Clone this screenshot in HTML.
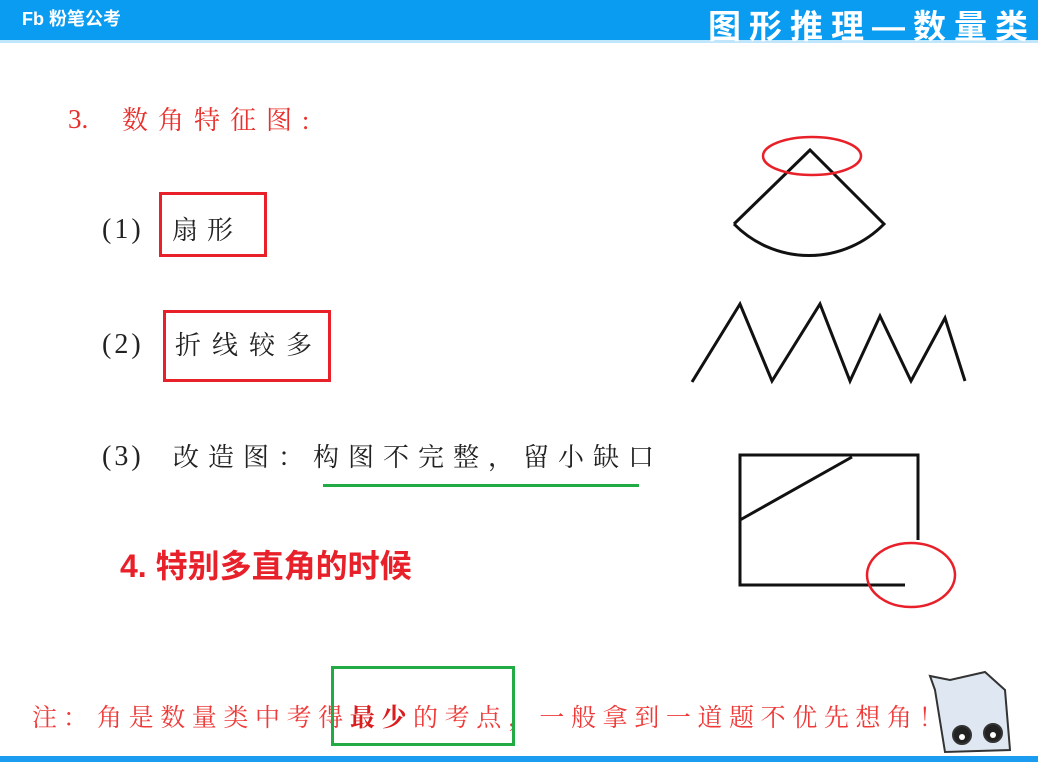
<!DOCTYPE html>
<html><head><meta charset="utf-8"><style>
body{margin:0;width:1038px;height:762px;overflow:hidden;background:#fff;position:relative;font-family:"Liberation Sans","Noto Sans CJK SC",sans-serif}
.a{position:absolute;white-space:nowrap}
.k{font-family:"Liberation Serif","Noto Serif CJK SC",serif}
</style></head><body>
<div class="a" style="left:0;top:0;width:1038px;height:40px;background:#0a9cf0;border-bottom:3px solid #bfe6fb"></div>
<div class="a" style="left:22px;top:5px;color:#fff;font-size:18px;font-weight:bold">Fb 粉笔公考</div>
<div class="a" style="left:708px;top:0px;color:#fff;font-size:33px;font-weight:bold;letter-spacing:8px">图形推理—数量类</div>

<div class="a k" style="left:68px;top:104px;color:#e8302c;font-size:27px">3.</div>
<div class="a k" style="left:122px;top:100px;color:#e8302c;font-size:26px;letter-spacing:10px">数角特征图:</div>
<div class="a k" style="left:102px;top:214px;color:#222;font-size:28px;letter-spacing:3px">(1)</div>
<div class="a k" style="left:172px;top:210px;color:#222;font-size:26px;letter-spacing:9px">扇形</div>
<div class="a" style="left:159px;top:192px;width:102px;height:59px;border:3px solid #e8202a"></div>
<div class="a k" style="left:102px;top:329px;color:#222;font-size:28px;letter-spacing:3px">(2)</div>
<div class="a k" style="left:175px;top:325px;color:#222;font-size:26px;letter-spacing:11px">折线较多</div>
<div class="a" style="left:163px;top:310px;width:162px;height:66px;border:3px solid #e8202a"></div>
<div class="a k" style="left:102px;top:441px;color:#222;font-size:28px;letter-spacing:3px">(3)</div>
<div class="a k" style="left:173px;top:437px;color:#222;font-size:26px;letter-spacing:9px">改造图：构图不完整，留小缺口</div>
<div class="a" style="left:323px;top:484px;width:316px;height:3px;background:#22aa44"></div>
<div class="a" style="left:120px;top:541px;color:#e8202a;font-size:32px;font-weight:bold">4. 特别多直角的时候</div>

<div class="a k" style="left:32px;top:698px;color:#ee3a38;font-size:25px;letter-spacing:6px">注：</div>
<div class="a k" style="left:97px;top:698px;color:#ee3a38;font-size:25px;letter-spacing:6.6px">角是数量类中考得<b style="color:#d81e1e">最少</b>的考点，一般拿到一道题不优先想角！</div>
<div class="a" style="left:331px;top:666px;width:178px;height:74px;border:3px solid #22aa44"></div>

<svg class="a" style="left:0;top:0" width="1038" height="762">
<g fill="none" stroke="#111" stroke-width="3">
<path d="M734 224 L810 150 L884 224 A105 105 0 0 1 734 224"/>
<path d="M692 382 L740 304 L772 381 L820 304 L850 381 L880 316 L911 381 L945 318 L965 381"/>
<path d="M905 585 L740 585 L740 455 L918 455 L918 540 M740 520 L852 457"/>
</g>
<g fill="none" stroke="#e8202a" stroke-width="2.5">
<ellipse cx="812" cy="156" rx="49" ry="19"/>
<ellipse cx="911" cy="575" rx="44" ry="32"/>
</g>
<rect x="0" y="756" width="1038" height="6" fill="#1a9cf0"/>
<g stroke="#333" stroke-width="2">
<path d="M935 690 L930 676 L950 680 L985 672 L1005 690 L1010 750 L945 752 Z" fill="#dfe8f2"/>
<circle cx="962" cy="735" r="9" fill="#222"/><circle cx="993" cy="733" r="9" fill="#222"/>
</g>
<circle cx="962" cy="737" r="3" fill="#fff"/><circle cx="993" cy="735" r="3" fill="#fff"/>
</svg>
</body></html>
